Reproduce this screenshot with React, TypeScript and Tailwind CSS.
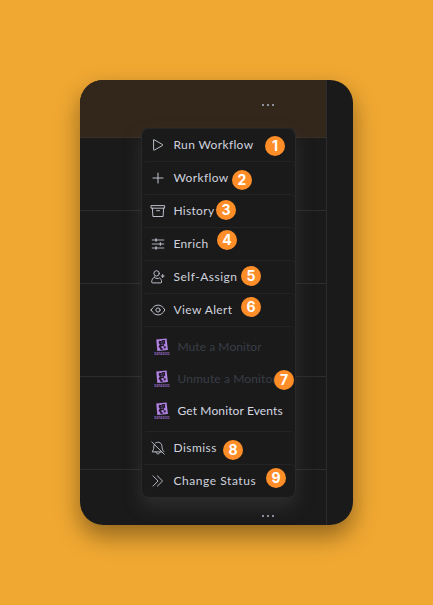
import type { ReactNode } from "react";

function Icon({ children }: { children: ReactNode }) {
  return (
    <svg
      width="16"
      height="16"
      viewBox="0 0 16 16"
      fill="none"
      stroke="#b9bdc9"
      strokeWidth="1"
      strokeLinecap="round"
      strokeLinejoin="round"
      className="shrink-0"
    >
      {children}
    </svg>
  );
}

const PlayIcon = () => (
  <Icon>
    <path d="M3.6 3.2v9.6q0 .7.6.4l8.3-4.7q.7-.5 0-1L4.2 2.8q-.6-.3-.6.4z" />
  </Icon>
);

const PlusIcon = () => (
  <Icon>
    <path d="M8 3v10M3 8h10" strokeWidth="1.1" />
  </Icon>
);

const ArchiveIcon = () => (
  <Icon>
    <path d="M1.4 2.6h13.2v2.6H1.4zM2.4 5.2l.5 8.3h10.2l.5-8.3M6.6 7.7h2.9" />
  </Icon>
);

const SlidersIcon = () => (
  <Icon>
    <path d="M2.2 4h11.6M2.2 8h11.6M2.2 12h11.6" strokeWidth="0.9" />
    <path d="M6 3.1v1.8M10.4 7.1v1.8M6 11.1v1.8" strokeWidth="1.5" />
  </Icon>
);

const AssignIcon = () => (
  <Icon>
    <circle cx="6.6" cy="4.4" r="2.7" />
    <path d="M4.4 8.2C2.5 9 1.8 10.9 1.7 13q0 .9.8.9h8.4q.8 0 .7-.9c-.1-2-.7-3.3-1.9-4.1-1.5 1-3.7.9-5.3-.7z" />
    <path d="M12.7 5.6v2.8M11.3 7h2.8" strokeWidth="1.1" />
  </Icon>
);

const EyeIcon = () => (
  <Icon>
    <path d="M1.2 8C2.8 4.8 5.2 3.1 8 3.1S13.2 4.8 14.8 8C13.2 11.2 10.8 12.9 8 12.9S2.8 11.2 1.2 8z" />
    <circle cx="8" cy="8" r="2.1" />
  </Icon>
);

const BellOffIcon = () => (
  <Icon>
    <path d="M1.8 2l12.4 12.2M4.3 4.5c-.8 1.2-.4 4-.9 5.2-.3.8-1.2 1.6-1.2 2.2h9.5M5.4 3C8.6.9 12 3 12 6.5c0 2 .3 3.3 1.9 5M6 12.1c.1 2.4 3.5 2.6 4 .1" />
  </Icon>
);

const ChevronsIcon = () => (
  <Icon>
    <path d="M3 2.9L8.1 8 3 13.1M7.4 2.9L12.6 8l-5.2 5.1" />
  </Icon>
);

function DogIcon() {
  return (
    <svg width="16" height="18" viewBox="0 0 16 18" className="shrink-0 overflow-visible">
      <path d="M2.3 1.5L12.6.4l1.3 11.6-10.6 1z" fill="#b384e2" />
      <path
        d="M5 2.8l1.8.1 2-1 2.4.2-.2 1.8.4 1.3-1.6 1.4.5 1.6-2.6-.2-.5 1.4 2.5 1.8-3 .7-1.3-2.5-1.1-.4 1.5-2.2L4.6 5z"
        fill="#251b31"
      />
      <path d="M7 4.3h.9M9.3 3.8h.8M7.4 6.4l1.6-.4" stroke="#b384e2" strokeWidth=".7" fill="none" />
      <path d="M9.6 8.6l2-.3.2 2-1.8.2z" fill="#251b31" />
      <text
        x="0.3"
        y="16.7"
        fontSize="3.8"
        fontWeight="700"
        fill="#9468bf"
        textLength="15.4"
        lengthAdjust="spacingAndGlyphs"
        className="font-['Inter',sans-serif]"
      >
        DATADOG
      </text>
    </svg>
  );
}

function Badge({ n, place }: { n: number; place: string }) {
  return (
    <span
      className={`absolute z-10 flex size-5 items-center justify-center rounded-full bg-[#ff8e28] font-['Inter','Liberation_Sans',sans-serif] text-[14px] font-bold leading-none text-white ${place}`}
    >
      {n}
    </span>
  );
}

type Item = { icon: ReactNode; label: string; tracking: string; n: number; place: string };

const topItems: Item[] = [
  { icon: <PlayIcon />, label: "Run Workflow", tracking: "tracking-[0.35px]", n: 1, place: "left-[123px] top-[7px]" },
  { icon: <PlusIcon />, label: "Workflow", tracking: "tracking-[0.35px]", n: 2, place: "left-[90px] top-[8px]" },
  { icon: <ArchiveIcon />, label: "History", tracking: "tracking-[0.3px]", n: 3, place: "left-[74px] top-[5px]" },
  { icon: <SlidersIcon />, label: "Enrich", tracking: "tracking-[0.3px]", n: 4, place: "left-[75px] top-[2px]" },
  { icon: <AssignIcon />, label: "Self-Assign", tracking: "tracking-[0.5px]", n: 5, place: "left-[99px] top-[5px]" },
  { icon: <EyeIcon />, label: "View Alert", tracking: "tracking-[0.4px]", n: 6, place: "left-[99px] top-[3px]" },
];

const bottomItems: Item[] = [
  { icon: <BellOffIcon />, label: "Dismiss", tracking: "tracking-[0.45px]", n: 8, place: "left-[81px] top-[8px]" },
  { icon: <ChevronsIcon />, label: "Change Status", tracking: "tracking-[0.55px]", n: 9, place: "left-[124px] top-[3px]" },
];

function Row({ item }: { item: Item }) {
  return (
    <div className="relative flex h-[33px] items-center gap-[7.5px] rounded-t-[5px] border-t border-[#242426] pl-[8px]">
      {item.icon}
      <span className={`whitespace-nowrap ${item.tracking}`}>{item.label}</span>
      <Badge n={item.n} place={item.place} />
    </div>
  );
}

function Monitor({ label, muted, tracking }: { label: string; muted?: boolean; tracking: string }) {
  return (
    <div className="flex h-8 items-center gap-[7.5px]">
      <DogIcon />
      <span className={`whitespace-nowrap ${tracking} ${muted ? "text-[#383e47]" : "text-[#d5d8e2]"}`}>{label}</span>
    </div>
  );
}

const Dots = () => (
  <div className="flex gap-[3px]">
    <i className="size-[2px] bg-[#9090a0]" />
    <i className="size-[2px] bg-[#9090a0]" />
    <i className="size-[2px] bg-[#9090a0]" />
  </div>
);

export default function App() {
  return (
    <main className="flex h-[605px] w-[433px] items-center justify-center overflow-hidden bg-[#f0a832] font-['Lato',sans-serif] text-[12px] leading-4 text-[#cfd2de]">
      <div className="relative h-[445px] w-[273px] rounded-[23px] shadow-[0_11px_24px_rgba(0,0,0,0.4)]">
        <div className="flex h-full overflow-hidden rounded-[23px] bg-[#1a1a1a]">
          <div className="flex w-[247px] flex-col border-r border-[#2b2b2e]">
            <div className="flex h-[58px] items-start justify-end border-b border-[#393028] bg-[#33271c] pr-[52px] pt-[24px]">
              <Dots />
            </div>
            <div className="h-[73px] border-b border-[#2c2c2e]" />
            <div className="h-[73px] border-b border-[#2c2c2e]" />
            <div className="h-[93px] border-b border-[#2c2c2e]" />
            <div className="h-[93px] border-b border-[#2c2c2e]" />
            <div className="flex grow items-start justify-end pr-[52px] pt-[45px]">
              <Dots />
            </div>
          </div>
        </div>
        <div className="absolute left-[61px] top-[48px] w-[155px] rounded-[8px] border border-[#29292b] bg-[#1a1a1a] shadow-[0_9px_18px_rgba(80,80,80,0.36)]">
          <div className="-mt-px">
            {topItems.map((item) => (
              <Row key={item.label} item={item} />
            ))}
            <div className="relative flex h-[105px] flex-col rounded-t-[5px] border-t border-[#242426] pl-[12px] pt-[4px]">
              <Monitor label="Mute a Monitor" muted tracking="tracking-[0.06px]" />
              <Monitor label="Unmute a Monitor" muted tracking="tracking-[0.12px]" />
              <Monitor label="Get Monitor Events" tracking="tracking-[0.12px]" />
              <Badge n={7} place="left-[132px] top-[43px]" />
            </div>
            {bottomItems.map((item) => (
              <Row key={item.label} item={item} />
            ))}
          </div>
        </div>
      </div>
    </main>
  );
}
